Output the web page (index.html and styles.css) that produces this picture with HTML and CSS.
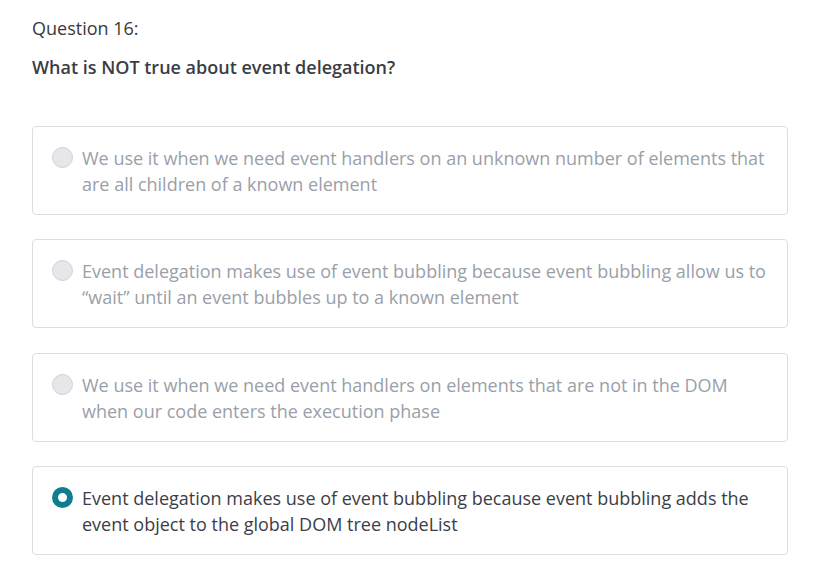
FILE: index.html
```html
<!DOCTYPE html>
<html>
<head>
<meta charset="utf-8">
<link rel="stylesheet" href="styles.css">
</head>
<body>
<div class="quiz">
  <div class="q-label">Question 16:</div>
  <div class="q-text">What is NOT true about event delegation?</div>
  <div class="options">
    <div class="option">
      <span class="radio"></span>
      <span class="opt-text">We use it when we need event handlers on an unknown number of elements that are all children of a known element</span>
    </div>
    <div class="option">
      <span class="radio"></span>
      <span class="opt-text">Event delegation makes use of event bubbling because event bubbling allow us to “wait” until an event bubbles up to a known element</span>
    </div>
    <div class="option">
      <span class="radio"></span>
      <span class="opt-text">We use it when we need event handlers on elements that are not in the DOM when our code enters the execution phase</span>
    </div>
    <div class="option selected">
      <span class="radio"></span>
      <span class="opt-text">Event delegation makes use of event bubbling because event bubbling adds the event object to the global DOM tree nodeList</span>
    </div>
  </div>
</div>
</body>
</html>
```
FILE: styles.css
```css
html, body {
  margin: 0;
  padding: 0;
  background: #fff;
}
body {
  font-family: "Open Sans", "Liberation Sans", sans-serif;
}
.quiz {
  padding: 16px 28px 0 32px;
}
.q-label {
  font-size: 18px;
  line-height: 24px;
  color: #3a3a3a;
}
.q-text {
  margin-top: 15px;
  font-size: 18px;
  line-height: 24px;
  font-weight: 600;
  color: #3a3d44;
}
.options {
  margin-top: 47px;
  display: flex;
  flex-direction: column;
  gap: 24px;
}
.option {
  box-sizing: border-box;
  height: 89px;
  border: 1px solid #dcdde0;
  border-radius: 4px;
  padding: 18px 16px 0 19px;
  display: flex;
  align-items: flex-start;
  gap: 9px;
}
.option + .option {
  margin-top: 0.4px;
}
.radio {
  flex: none;
  box-sizing: border-box;
  width: 21px;
  height: 21px;
  margin-top: 2px;
  border-radius: 50%;
  background: #e6e7ea;
  border: 1px solid #cfd1d5;
}
.opt-text {
  font-size: 18px;
  line-height: 26px;
  color: #9a9fa9;
}
.selected .radio {
  background: #fff;
  border: 6px solid #0d7d8f;
}
.selected .opt-text {
  color: #3b3e47;
}
```
